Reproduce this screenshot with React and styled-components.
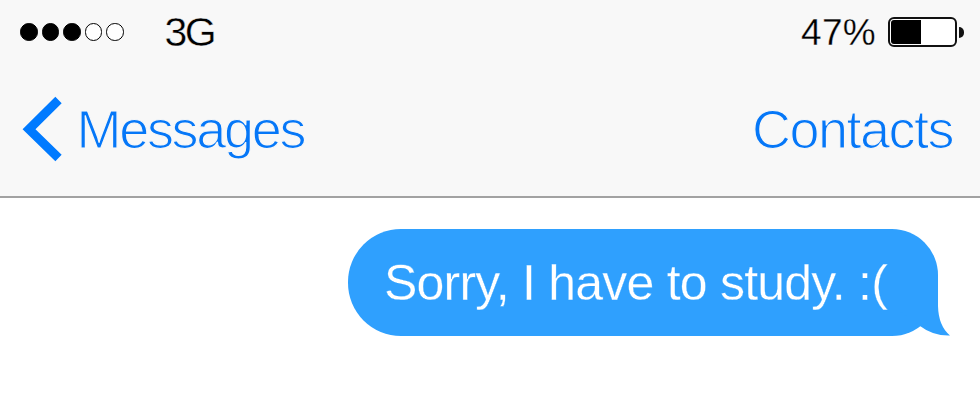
import React from "react";
import styled, { createGlobalStyle } from "styled-components";

const SIGNAL = [true, true, true, false, false];

function App() {
    return (
        <>
            <GlobalStyle />
            <Screen>
                <Header>
                    <StatusBar>
                        <StatusGroup>
                            <Signal>
                                {SIGNAL.map((filled, index) => (
                                    <Dot key={index} $filled={filled} />
                                ))}
                            </Signal>
                            <Carrier>3G</Carrier>
                        </StatusGroup>
                        <StatusGroup>
                            <Percent>47%</Percent>
                            <Battery>
                                <BatteryBody>
                                    <BatteryLevel $level={47} />
                                </BatteryBody>
                                <BatteryCap />
                            </Battery>
                        </StatusGroup>
                    </StatusBar>
                    <NavBar>
                        <BackButton>
                            <svg width="40" height="66" viewBox="0 0 40 66">
                                <path
                                    d="M36.5 4 L7 33.3 L36.5 62"
                                    fill="none"
                                    stroke="#007aff"
                                    strokeWidth="9"
                                />
                            </svg>
                            <NavText $spacing="-2.3px">Messages</NavText>
                        </BackButton>
                        <NavButton>
                            <NavText $spacing="-1.5px">Contacts</NavText>
                        </NavButton>
                    </NavBar>
                </Header>
                <Thread>
                    <Bubble>
                        <Message>Sorry, I have to study. :(</Message>
                        <Tail width="52" height="52" viewBox="0 0 52 52">
                            <path
                                d="M40 0 V22 Q40.5 42 52 51.5 Q35 52 22 42 L0 26 V0 Z"
                                fill="#2fa0fe"
                            />
                        </Tail>
                    </Bubble>
                </Thread>
            </Screen>
        </>
    );
}

export default App;

const GlobalStyle = createGlobalStyle`
    * {
        box-sizing: border-box;
    }
    body {
        margin: 0;
        background: #fff;
        font-family: "Liberation Sans", Arial, sans-serif;
    }
`;
const Screen = styled.div`
    width: 980px;
    height: 401px;
    overflow: hidden;
    background: #fff;
`;
const Header = styled.header`
    height: 198px;
    background: #f8f8f8;
    border-bottom: 2px solid #a2a2a2;
`;
const StatusBar = styled.div`
    display: flex;
    justify-content: space-between;
    height: 64px;
    padding: 0 16px 0 20px;
`;
const StatusGroup = styled.div`
    display: flex;
    align-items: center;
`;
const Signal = styled.div`
    display: flex;
    gap: 4px;
    margin-right: 41px;
`;
const Dot = styled.span`
    width: 17.5px;
    height: 17.5px;
    border: 1.5px solid #000;
    border-radius: 50%;
    background: ${(props) => (props.$filled ? "#000" : "#fff")};
`;
/* a stroke in the bar colour trims the glyphs to a lighter weight */
const Carrier = styled.span`
    font-size: 41px;
    line-height: 62px;
    letter-spacing: -2.5px;
    -webkit-text-stroke: 0.4px #f8f8f8;
`;
const Percent = styled.span`
    font-size: 37px;
    line-height: 64px;
    margin: 2px 12px 0 0;
    letter-spacing: 0.3px;
    -webkit-text-stroke: 0.3px #f8f8f8;
`;
const Battery = styled.div`
    display: flex;
    align-items: center;
    gap: 2px;
`;
const BatteryBody = styled.div`
    width: 69px;
    height: 30px;
    padding: 1px;
    border: 2px solid #111;
    border-radius: 6px;
    background: #fff;
`;
const BatteryLevel = styled.div`
    width: ${(props) => props.$level}%;
    height: 100%;
    border-radius: 3px 0 0 3px;
    background: #000;
`;
const BatteryCap = styled.div`
    width: 5px;
    height: 11px;
    border-radius: 0 5px 5px 0;
    background: #111;
`;
const NavBar = styled.nav`
    display: flex;
    justify-content: space-between;
    align-items: center;
    height: 130px;
    padding: 0 27px 0 22px;
`;
const NavButton = styled.button`
    display: flex;
    align-items: center;
    padding: 0;
    border: none;
    background: none;
    font-family: inherit;
`;
const BackButton = styled(NavButton)`
    gap: 14.5px;
`;
const NavText = styled.span`
    font-size: 54px;
    line-height: 66px;
    letter-spacing: ${(props) => props.$spacing};
    color: #0577f8;
    -webkit-text-stroke: 1.2px #f8f8f8;
`;
const Thread = styled.main`
    display: flex;
    justify-content: flex-end;
    padding: 30.5px 42px 0 0;
`;
const Bubble = styled.div`
    position: relative;
    width: 590px;
    height: 107px;
    padding-left: 36px;
    border-radius: 53px 46px 46px 53px;
    background: #2fa0fe;
`;
const Message = styled.p`
    margin: 0;
    font-size: 50px;
    line-height: 108px;
    letter-spacing: -0.78px;
    white-space: nowrap;
    color: #fff;
    -webkit-text-stroke: 0.3px #2fa0fe;
`;
const Tail = styled.svg`
    position: absolute;
    right: -12px;
    bottom: 0;
`;
